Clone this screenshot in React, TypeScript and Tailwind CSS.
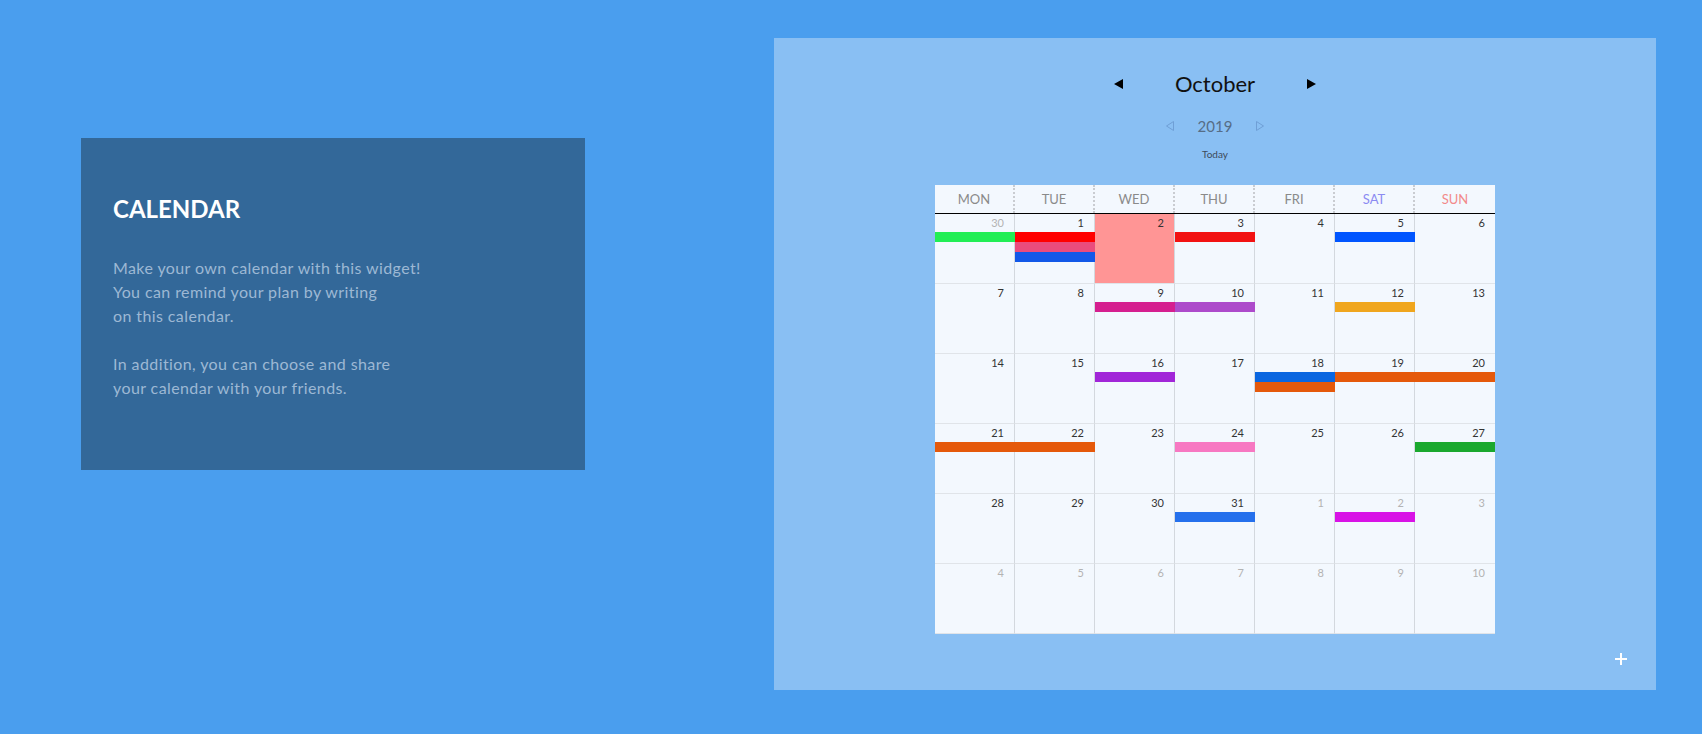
import React from "react";

type Day = { n: number; other?: boolean };
type Ev = { w: number; c: number; span: number; slot: number; color: string };

const weeks: Day[][] = [
  [{ n: 30, other: true }, { n: 1 }, { n: 2 }, { n: 3 }, { n: 4 }, { n: 5 }, { n: 6 }],
  [{ n: 7 }, { n: 8 }, { n: 9 }, { n: 10 }, { n: 11 }, { n: 12 }, { n: 13 }],
  [{ n: 14 }, { n: 15 }, { n: 16 }, { n: 17 }, { n: 18 }, { n: 19 }, { n: 20 }],
  [{ n: 21 }, { n: 22 }, { n: 23 }, { n: 24 }, { n: 25 }, { n: 26 }, { n: 27 }],
  [{ n: 28 }, { n: 29 }, { n: 30 }, { n: 31 }, { n: 1, other: true }, { n: 2, other: true }, { n: 3, other: true }],
  [{ n: 4, other: true }, { n: 5, other: true }, { n: 6, other: true }, { n: 7, other: true }, { n: 8, other: true }, { n: 9, other: true }, { n: 10, other: true }],
];

const events: Ev[] = [
  { w: 0, c: 0, span: 1, slot: 0, color: "bg-[#22ee55]" },
  { w: 0, c: 1, span: 1, slot: 0, color: "bg-[#ff0000]" },
  { w: 0, c: 3, span: 1, slot: 0, color: "bg-[#f21212]" },
  { w: 0, c: 5, span: 1, slot: 0, color: "bg-[#0055ff]" },
  { w: 0, c: 1, span: 1, slot: 1, color: "bg-[#ea4c7d]" },
  { w: 0, c: 1, span: 1, slot: 2, color: "bg-[#1258e8]" },
  { w: 1, c: 2, span: 1, slot: 0, color: "bg-[#d51f8f]" },
  { w: 1, c: 3, span: 1, slot: 0, color: "bg-[#ad4bcb]" },
  { w: 1, c: 5, span: 1, slot: 0, color: "bg-[#f0a61e]" },
  { w: 2, c: 2, span: 1, slot: 0, color: "bg-[#a126d8]" },
  { w: 2, c: 4, span: 1, slot: 0, color: "bg-[#0a66e0]" },
  { w: 2, c: 5, span: 2, slot: 0, color: "bg-[#e5590b]" },
  { w: 2, c: 4, span: 1, slot: 1, color: "bg-[#e5590b]" },
  { w: 3, c: 0, span: 2, slot: 0, color: "bg-[#e5590b]" },
  { w: 3, c: 3, span: 1, slot: 0, color: "bg-[#f778c2]" },
  { w: 3, c: 6, span: 1, slot: 0, color: "bg-[#1aa82e]" },
  { w: 4, c: 3, span: 1, slot: 0, color: "bg-[#2570ec]" },
  { w: 4, c: 5, span: 1, slot: 0, color: "bg-[#d813e6]" },
];

const colStart = ["col-start-1", "col-start-2", "col-start-3", "col-start-4", "col-start-5", "col-start-6", "col-start-7"];
const colSpan = ["col-span-1", "col-span-1", "col-span-2", "col-span-3"];
const rowStart = ["row-start-2", "row-start-3", "row-start-4"];

const heads = [
  { t: "MON", c: "text-[#8a8a8a]" },
  { t: "TUE", c: "text-[#8a8a8a]" },
  { t: "WED", c: "text-[#8a8a8a]" },
  { t: "THU", c: "text-[#8a8a8a]" },
  { t: "FRI", c: "text-[#8a8a8a]" },
  { t: "SAT", c: "text-[#8b8bf2]" },
  { t: "SUN", c: "text-[#f28a8a]" },
];

export default function App() {
  return (
    <div className="w-full h-[734px] bg-[#4a9eee] flex items-start font-['Lato',sans-serif] overflow-hidden">
      <div className="ml-[81px] mt-[138px] w-[504px] h-[332px] shrink-0 bg-[#336899] pl-[32px] pt-[59px]">
        <h1 className="text-[24px] leading-[24px] font-bold text-white">CALENDAR</h1>
        <p className="mt-[35px] text-[16px] leading-[24px] tracking-[0.4px] text-[#9db8d4]">
          Make your own calendar with this widget!
          <br />
          You can remind your plan by writing
          <br />
          on this calendar.
          <br />
          <br />
          In addition, you can choose and share
          <br />
          your calendar with your friends.
        </p>
      </div>

      <div className="relative ml-[189px] mt-[38px] w-[882px] h-[652px] shrink-0 bg-[#89bff3] flex flex-col items-center pt-[31px]">
        <div className="w-[202px] h-[30px] flex items-center justify-between">
          <svg width="9" height="10" viewBox="0 0 9 10"><polygon points="9,0 9,10 0,5" fill="#000" /></svg>
          <span className="text-[22px] leading-[30px] text-[#111]">October</span>
          <svg width="9" height="10" viewBox="0 0 9 10"><polygon points="0,0 0,10 9,5" fill="#000" /></svg>
        </div>
        <div className="mt-[17px] w-[98px] h-[20px] flex items-center justify-between">
          <svg width="8" height="10" viewBox="0 0 8 10"><polygon points="7.5,0.5 7.5,9.5 0.5,5" fill="none" stroke="#6f9fd6" strokeWidth="1" /></svg>
          <span className="text-[15px] leading-[20px] text-[#566d86]">2019</span>
          <svg width="8" height="10" viewBox="0 0 8 10"><polygon points="0.5,0.5 0.5,9.5 7.5,5" fill="none" stroke="#6f9fd6" strokeWidth="1" /></svg>
        </div>
        <div className="mt-[11px] text-[10px] leading-[14px] text-[#3d4a5a]">Today</div>

        <div className="mt-[24px] w-[560px] bg-[#f3f8fe]">
          <div className="grid grid-cols-7 h-[29px] border-b border-black">
            {heads.map((h, i) => (
              <div
                key={h.t}
                className={`flex items-center justify-center text-[13px] pt-[1px] ${h.c} ${i < 6 ? "border-r-2 border-dotted border-[#c9ccd1]" : ""}`}
              >
                {h.t}
              </div>
            ))}
          </div>
          {weeks.map((wk, wi) => (
            <div key={wi} className="grid grid-cols-7 grid-rows-[18px_10px_10px_10px_1fr] h-[70px]">
              {wk.map((d, di) => {
                const today = wi === 0 && di === 2;
                return (
                  <div
                    key={di}
                    className={`${colStart[di]} row-span-full border-b border-[#e0e4e9] ${di < 6 ? "border-r border-r-[#d3d8de]" : ""} ${today ? "bg-[#ff9595]" : ""} text-right pr-[10px] text-[11px] leading-[18px] ${d.other ? "text-[#b3b3b3]" : "text-[#333]"}`}
                  >
                    {d.n}
                  </div>
                );
              })}
              {events
                .filter((e) => e.w === wi)
                .map((e, i) => (
                  <div key={i} className={`${colStart[e.c]} ${colSpan[e.span]} ${rowStart[e.slot]} ${e.color}`} />
                ))}
            </div>
          ))}
        </div>

        <button className="absolute right-[29px] bottom-[25px] w-[12px] h-[12px]">
          <svg width="12" height="12" viewBox="0 0 12 12">
            <path d="M6 0v12M0 6h12" stroke="#fff" strokeWidth="2" />
          </svg>
        </button>
      </div>
    </div>
  );
}
